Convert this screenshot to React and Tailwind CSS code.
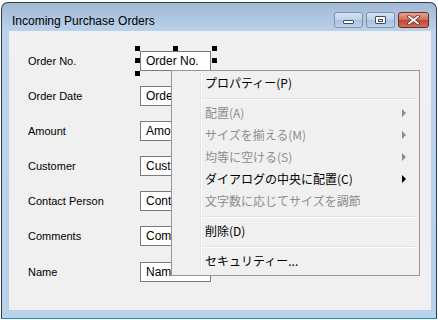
const fields = [
  { label: 'Order No.', value: 'Order No.' },
  { label: 'Order Date', value: 'Order Date' },
  { label: 'Amount', value: 'Amount' },
  { label: 'Customer', value: 'Customer' },
  { label: 'Contact Person', value: 'Contact' },
  { label: 'Comments', value: 'Comments' },
  { label: 'Name', value: 'Name' },
];

const menu = [
  { label: 'プロパティー(P)' },
  { sep: true },
  { label: '配置(A)', disabled: true, sub: true },
  { label: 'サイズを揃える(M)', disabled: true, sub: true },
  { label: '均等に空ける(S)', disabled: true, sub: true },
  { label: 'ダイアログの中央に配置(C)', sub: true },
  { label: '文字数に応じてサイズを調節', disabled: true },
  { sep: true },
  { label: '削除(D)' },
  { sep: true },
  { label: 'セキュリティー...' },
];

const handles = [
  'left-[126px] top-[15px]',
  'left-[164px] top-[15px]',
  'left-[203px] top-[15px]',
  'left-[126px] top-[27px]',
  'left-[203px] top-[27px]',
  'left-[126px] top-[40px]',
];

const CaptionButton = ({ kind }) => {
  if (kind === 'close') {
    return (
      <div className="flex h-[16px] w-[31px] items-center justify-center rounded-[3px] border border-[#6b2a24] bg-[linear-gradient(#e4a593,#cf6a55_50%,#c2442e_51%,#d0705a)]">
        <svg width="13" height="10" viewBox="0 0 13 10">
          <path d="M2 1.5 L11 8.5 M11 1.5 L2 8.5" stroke="#5a2a25" strokeWidth="3.4" strokeLinecap="square" />
          <path d="M2 1.5 L11 8.5 M11 1.5 L2 8.5" stroke="#ffffff" strokeWidth="1.8" strokeLinecap="square" />
        </svg>
      </div>
    );
  }
  return (
    <div className="flex h-[16px] w-[29px] items-center justify-center rounded-[3px] border border-[#7d93ad] bg-[linear-gradient(#d6e4f3,#bcd0e8_50%,#a9c1dd_51%,#bdd2ea)]">
      {kind === 'min' ? (
        <div className="mt-[4px] h-[4px] w-[11px] rounded-[1px] border border-[#3d4d60] bg-white" />
      ) : (
        <div className="flex h-[8px] w-[11px] items-center justify-center rounded-[1px] border border-[#3d4d60] bg-white">
          <div className="h-[3px] w-[5px] border border-[#3d4d60]" />
        </div>
      )}
    </div>
  );
};

export default function App() {
  return (
    <div className="relative h-[320px] w-[438px] overflow-hidden bg-white font-['Liberation_Sans',sans-serif]">
      <div className="ml-[1px] mt-[2px] flex h-[317px] w-[436px] flex-col rounded-t-[7px] border border-[#2f3d4c] border-b-[#1a8fb0] bg-[linear-gradient(#a2b9d5,#bcd3eb_30px,#b9d1ea)]">
        <div className="flex h-[28px] shrink-0 items-start justify-between">
          <span className="ml-[10px] mt-[11px] text-[12px] leading-[14px] text-black">Incoming Purchase Orders</span>
          <div className="mr-[7px] mt-[9px] flex gap-[3px]">
            <CaptionButton kind="min" />
            <CaptionButton kind="max" />
            <CaptionButton kind="close" />
          </div>
        </div>
        <div className="relative ml-[7px] mr-[5px] h-[279px] bg-[#f0f0f0]">
          <div className="flex flex-col gap-[15px] pt-[20px]">
            {fields.map((f, i) => (
              <div key={f.label} className={`flex h-[20px] items-center ${i === fields.length - 1 ? 'mt-[1px]' : ''}`}>
                <span className="ml-[19px] w-[112px] text-[11px] text-black">{f.label}</span>
                <div className="flex h-[20px] w-[71px] items-center border border-[#7a7a7a] bg-white pl-[5px] text-[12px] text-black">
                  <span className="overflow-hidden whitespace-nowrap">{f.value}</span>
                </div>
              </div>
            ))}
          </div>

          {handles.map((h) => (
            <div key={h} className={`absolute h-[5px] w-[5px] bg-black ${h}`} />
          ))}

          <div className="absolute left-[162px] top-[39px] w-[249px] border border-[#979797] bg-[#f0f0f0] py-[2px] font-['Noto_Sans_CJK_JP',sans-serif]">
            <div className="absolute bottom-[2px] left-[28px] top-[2px] w-[2px] border-l border-[#e2e3e3] bg-white" />
            {menu.map((m, i) =>
              m.sep ? (
                <div key={i} className="flex h-[8px] items-center pl-[30px] pr-[4px]">
                  <div className="h-[2px] w-full border-t border-[#e0e0e0] bg-white" />
                </div>
              ) : (
                <div key={i} className="relative flex h-[22px] items-center pb-[3px] pl-[33px]">
                  <span className={`text-[12px] leading-none ${m.disabled ? 'text-[#8d8d8d]' : 'text-black'}`}>{m.label}</span>
                  {m.sub && (
                    <div
                      className={`absolute left-[230px] top-[6px] h-0 w-0 border-y-[4px] border-l-[4px] border-y-transparent ${
                        m.disabled ? 'border-l-[#8d8d8d]' : 'border-l-black'
                      }`}
                    />
                  )}
                </div>
              )
            )}
          </div>
        </div>
      </div>
    </div>
  );
}
